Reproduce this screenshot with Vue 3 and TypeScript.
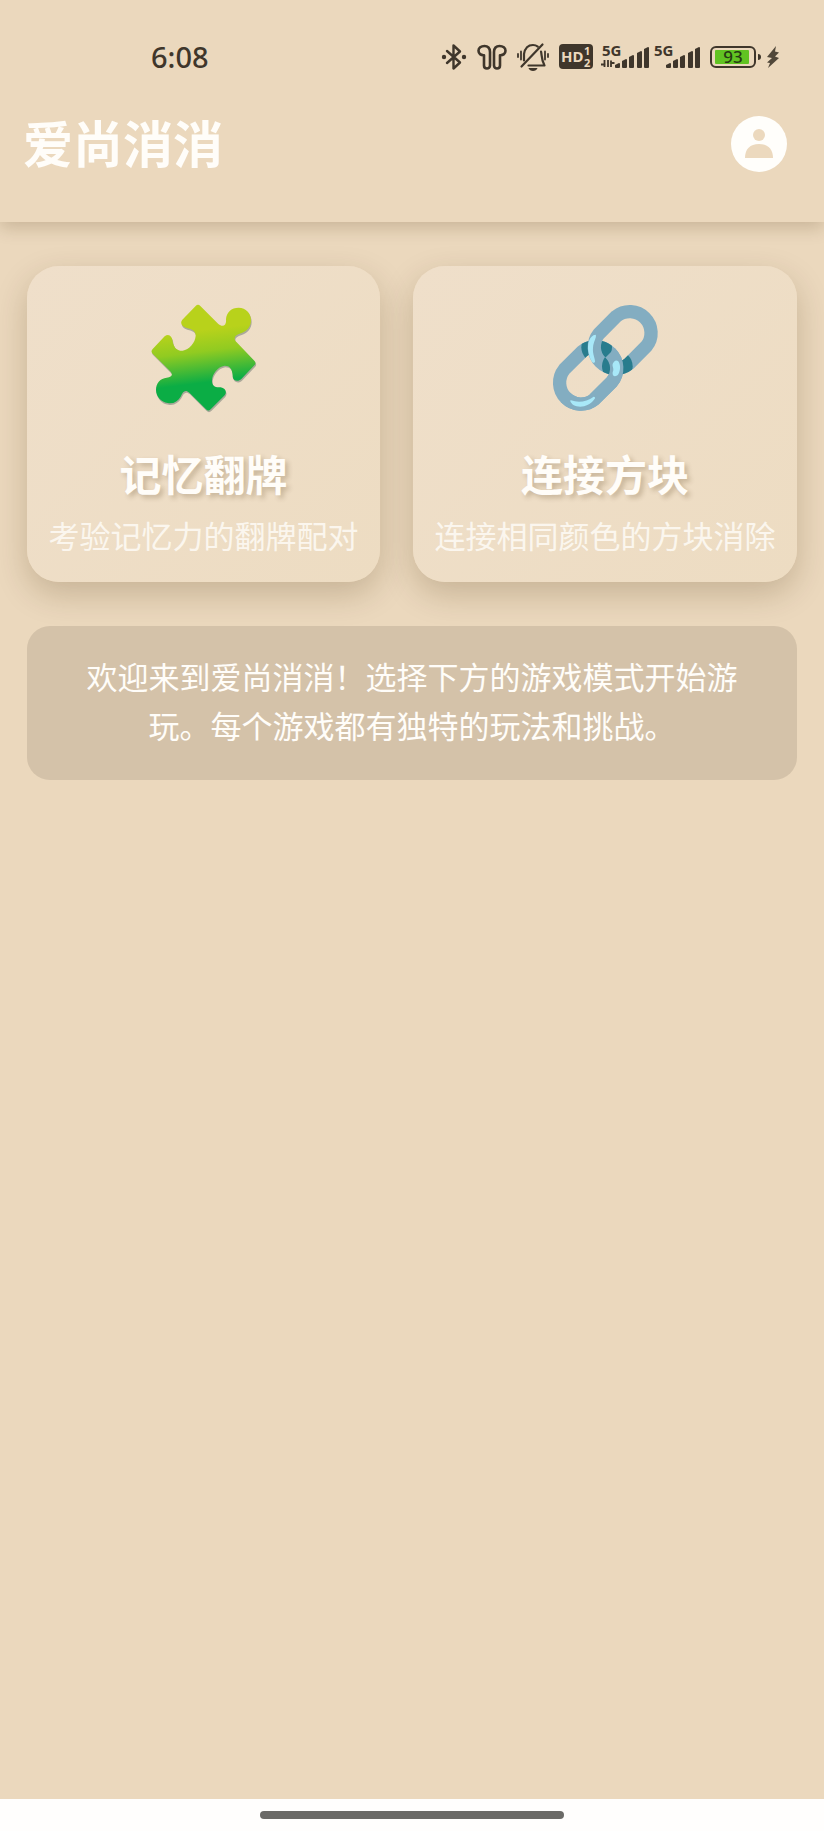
<script setup lang="ts">
interface Game {
  id: 'memory' | 'link'
  title: string
  description: string
}

interface SignalBar {
  x: number
  y: number
}

const games: Game[] = [
  { id: 'memory', title: '记忆翻牌', description: '考验记忆力的翻牌配对' },
  { id: 'link', title: '连接方块', description: '连接相同颜色的方块消除' },
]

const bars: SignalBar[] = [
  { x: 0, y: 20 },
  { x: 7, y: 16 },
  { x: 14, y: 12 },
  { x: 22, y: 8 },
  { x: 29, y: 4 },
]
</script>

<template>
  <div class="screen">
    <header class="app-header">
      <div class="status-bar">
        <time class="clock">6:08</time>
        <div class="indicators">
          <svg class="bluetooth" width="26" height="28" viewBox="0 0 26 28" aria-label="蓝牙">
            <path d="M6 8l13 11.500-6.500 6V2.500l6.500 6L6 20" fill="none" stroke="#3f362b" stroke-width="2.400" stroke-linejoin="round" stroke-linecap="round" />
            <circle cx="3" cy="14" r="2.200" fill="#3f362b" />
            <circle cx="23" cy="14" r="2.200" fill="#3f362b" />
          </svg>
          <svg class="earbuds" width="30" height="28" viewBox="0 0 30 28" aria-label="耳机">
            <g fill="none" stroke="#3f362b" stroke-width="2.600" stroke-linejoin="round">
              <path d="M13 9C13 5 10.800 3 7.500 3C4 3 1.500 5 1.500 7.800C1.500 10.600 3.800 12.400 7 12.200V22.500C7 26.500 13 26.500 13 22.500Z" />
              <path d="M17 9C17 5 19.200 3 22.500 3C26 3 28.500 5 28.500 7.800C28.500 10.600 26.200 12.400 23 12.200V22.500C23 26.500 17 26.500 17 22.500Z" />
            </g>
          </svg>
          <svg class="mute" width="32" height="28" viewBox="0 0 32 28" aria-label="静音">
            <g fill="none" stroke="#3f362b" stroke-width="2.200" stroke-linecap="round" stroke-linejoin="round">
              <path d="M4.500 23.500L25.500 1.500" />
              <path d="M7 17.500V11C8 5 11.500 2 16 2C18 2 19.500 2.600 20.800 3.600" />
              <path d="M24 8.500C25 12 24 16 27.500 22.500H11.500" />
              <path d="M1 11v3M4 8.500v8M28 8.500v8M31 11v3" stroke-width="1.800" />
            </g>
            <path d="M11.500 25h9c-1 4-8 4-9 0z" fill="#3f362b" />
          </svg>
          <svg class="hd" width="34" height="26" viewBox="0 0 34 26" aria-label="HD 1 2">
            <rect width="34" height="25" rx="4" fill="#3f362b" />
            <g class="glyphs" fill="#ecd9be">
              <text x="2" y="18" font-size="15">HD</text>
              <text x="25" y="11" font-size="11">1</text>
              <text x="25" y="23" font-size="11">2</text>
            </g>
          </svg>
          <svg class="signal" width="49" height="28" viewBox="0 0 49 28" aria-label="5G">
            <g class="glyphs" fill="#3f362b"><text x="1" y="13" font-size="15">5G</text></g>
            <path d="M3.500 17v7M0 21.500h4.500M7 17v7M10 17.500v6.500M10 20h3.500" fill="none" stroke="#3f362b" stroke-width="1.800" />
            <g transform="translate(14 0)" fill="#3f362b">
              <path v-for="bar in bars" :key="bar.x" :d="`M${bar.x} 24V${bar.y + 2}l4-2q1 0 1 1V24q0 1-1 1h-3q-1 0-1-1z`" />
            </g>
          </svg>
          <svg class="signal second" width="46" height="28" viewBox="0 0 46 28" aria-label="5G">
            <g class="glyphs" fill="#3f362b"><text x="0" y="13" font-size="15">5G</text></g>
            <g transform="translate(12 0)" fill="#3f362b">
              <path v-for="bar in bars" :key="bar.x" :d="`M${bar.x} 24V${bar.y + 2}l4-2q1 0 1 1V24q0 1-1 1h-3q-1 0-1-1z`" />
            </g>
          </svg>
          <svg class="battery" width="52" height="24" viewBox="0 0 52 24" aria-label="电量 93">
            <rect x="1" y="2" width="44" height="20" rx="5" fill="none" stroke="#3f362b" stroke-width="2" />
            <rect x="5" y="5" width="34" height="14" rx="1" fill="#61c322" />
            <path d="M48 9v6q3 0 3-3t-3-3z" fill="#3f362b" />
            <text class="level" x="23" y="18" font-size="17" text-anchor="middle" fill="#263914">93</text>
          </svg>
          <svg class="bolt" width="14" height="24" viewBox="0 0 14 24" aria-label="充电中">
            <path d="M10 1L1 12l5 1-5 4.500 3 .5-2 5L13 13l-4-1.500 4-4-4-1z" fill="#51483a" />
          </svg>
        </div>
      </div>
      <div class="title-bar">
        <h1>爱尚消消</h1>
        <button class="profile" type="button" aria-label="个人中心">
          <svg width="58" height="58" viewBox="0 0 58 58">
            <circle cx="29" cy="29" r="28" fill="#fffefb" />
            <circle cx="29" cy="20" r="6" fill="#ecd9be" />
            <path d="M15 43C15 34 20 29 29 29S43 34 43 43z" fill="#ecd9be" />
          </svg>
        </button>
      </div>
    </header>

    <main>
      <section class="games">
        <button v-for="game in games" :key="game.id" class="card" type="button">
          <span class="picture">
            <svg v-if="game.id === 'memory'" width="110" height="111" viewBox="57 64 330 333" aria-hidden="true">
              <defs>
                <linearGradient id="leaf" x1="180" y1="72" x2="220" y2="390" gradientUnits="userSpaceOnUse">
                  <stop offset="0.250" stop-color="#b8d21b" />
                  <stop offset="0.450" stop-color="#91cb21" />
                  <stop offset="0.740" stop-color="#0bad45" />
                </linearGradient>
                <path id="piece" d="M197 76Q204 68 211 76L265 130C280 142 290 132 288 116C289 95 304 81 326 81C348 81 363 98 363 119C363 141 349 152 333 158C313 164 309 173 320 185L373 240Q380 247 373 254L334 295C324 305 307 300 308 286C307 264 299 255 284 255C262 258 245 281 246 303C248 318 258 320 272 320C286 322 292 334 284 344L242 386Q235 393 228 386L178 336C165 325 158 334 152 348C143 363 130 370 113 367C94 365 78 348 78 328C78 307 91 293 110 291C127 289 130 282 120 271L68 219Q61 212 68 205L104 167C117 157 127 168 128 183C132 203 144 211 158 210C177 207 196 186 197 165C197 151 187 145 170 142C155 139 149 126 157 117Z" />
              </defs>
              <use href="#piece" x="2" y="5" fill="#aaa99a" />
              <use href="#piece" fill="url(#leaf)" />
            </svg>
            <svg v-else width="110" height="111" viewBox="60 67 330 333" aria-hidden="true">
              <defs>
                <path id="lower-ring" d="M103 269L156 216A64 64 0 0 1 246 306L193 359A64 64 0 0 1 103 269Z" fill="none" stroke-width="40" />
                <path id="upper-ring" d="M207 162L259 110A64 64 0 0 1 349 200L297 252A64 64 0 0 1 207 162Z" fill="none" stroke-width="40" />
                <clipPath id="upper-crossing"><circle cx="200" cy="203" r="46" /></clipPath>
                <clipPath id="lower-crossing"><circle cx="262" cy="260" r="46" /></clipPath>
                <clipPath id="front-half"><path d="M60 400L400 60V400Z" /></clipPath>
              </defs>
              <use href="#lower-ring" stroke="#83adc1" />
              <g clip-path="url(#upper-crossing)"><use href="#lower-ring" stroke="#287c8d" /></g>
              <use href="#upper-ring" stroke="#83adc1" />
              <g clip-path="url(#lower-crossing)"><use href="#upper-ring" stroke="#287c8d" /></g>
              <g clip-path="url(#front-half)"><use href="#lower-ring" stroke="#83adc1" /></g>
              <g fill="#a8e8f8">
                <path d="M197 165C178 167 170 194 176 219C180 242 190 255 195 247C196 237 187 223 189 204C190 186 201 172 197 165Z" />
                <path d="M252 246C241 258 255 263 248 278C246 291 257 294 265 284C273 270 271 251 264 244Q258 240 252 246Z" />
                <path d="M123 362C145 370 170 367 191 351Q198 352 193 359C178 380 150 387 130 376C122 370 118 362 123 362Z" />
              </g>
            </svg>
          </span>
          <strong class="card-title">{{ game.title }}</strong>
          <span class="card-text">{{ game.description }}</span>
        </button>
      </section>
      <p class="welcome">欢迎来到爱尚消消！选择下方的游戏模式开始游玩。每个游戏都有独特的玩法和挑战。</p>
    </main>

    <footer class="gesture-area"><span class="gesture-bar"></span></footer>
  </div>
</template>

<style>
body {
  margin: 0;
  background: #ebd8bd;
}
</style>

<style scoped>
.screen {
  display: flex;
  flex-direction: column;
  min-height: 100vh;
  background: #ebd8bd;
  color: #fffdf9;
  font-family: "Noto Sans CJK SC", sans-serif;
}

.app-header {
  box-sizing: border-box;
  padding-bottom: 30px;
  background: #ebd8bd;
  box-shadow: 0 6px 16px rgba(70, 45, 10, 0.2);
}

.status-bar {
  display: flex;
  align-items: center;
  justify-content: space-between;
  height: 76px;
  padding: 19px 44px 0 151px;
  color: #3f362b;
}

.clock {
  font-family: "Noto Sans", sans-serif;
  font-size: 29px;
  font-weight: 500;
  line-height: 38px;
}

.indicators {
  display: flex;
  align-items: center;
}

.indicators svg {
  flex: none;
  overflow: visible;
}

.earbuds,
.mute,
.hd {
  margin-left: 10px;
}

.signal {
  margin-left: 8px;
}

.signal.second {
  margin-left: 4px;
}

.battery {
  margin-left: 10px;
}

.bolt {
  margin-left: 4px;
}

.glyphs,
.level {
  font-family: "Noto Sans", sans-serif;
  font-weight: 700;
}

.level {
  font-weight: 500;
}

.title-bar {
  display: flex;
  align-items: center;
  justify-content: space-between;
  height: 97px;
  padding: 0 36px 0 23px;
}

h1 {
  margin: 0;
  padding-bottom: 6px;
  font-size: 50px;
  font-weight: 700;
  line-height: 72px;
}

button {
  margin: 0;
  border: 0;
  color: inherit;
  font-family: inherit;
  cursor: pointer;
}

.profile {
  display: flex;
  padding: 0;
  border-radius: 50%;
  background: transparent;
}

main {
  display: flex;
  flex: 1;
  flex-direction: column;
  gap: 44px;
  padding: 44px 27px;
}

.games {
  display: flex;
  gap: 33px;
}

.card {
  display: flex;
  flex: 1 1 auto;
  flex-direction: column;
  align-items: center;
  padding: 23px 20px;
  border-radius: 32px;
  background: linear-gradient(135deg, #efdfca, #eddcc2);
  box-shadow: 0 12px 32px rgba(70, 45, 10, 0.22);
}

.picture {
  display: flex;
  align-items: center;
  height: 136px;
}

.card-title {
  margin: 18px 0 8px;
  font-size: 42px;
  font-weight: 700;
  line-height: 60px;
  text-shadow: 3px 3px 5px rgba(70, 45, 10, 0.24);
}

.card-text {
  font-size: 31px;
  font-weight: 400;
  line-height: 48px;
  opacity: 0.8;
}

.welcome {
  margin: 0;
  padding: 25px 46px 31px;
  border-radius: 23px;
  background: #d4c2a9;
  font-size: 31px;
  font-weight: 400;
  line-height: 49px;
  text-align: center;
}

.gesture-area {
  display: flex;
  justify-content: center;
  height: 20px;
  padding-top: 12px;
  background: #fffefd;
}

.gesture-bar {
  width: 37%;
  height: 8px;
  border-radius: 4px;
  background: #6b6a67;
}
</style>
